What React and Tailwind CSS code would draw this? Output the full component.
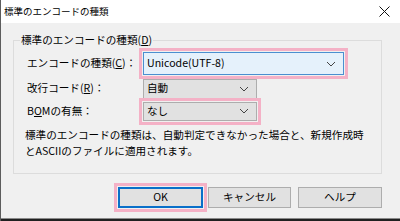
import React from 'react';

const Chevron = () => (
  <svg width="10" height="6" viewBox="0 0 10 6" className="shrink-0">
    <polyline points="1,1 5,5 9,1" fill="none" stroke="#444" strokeWidth="1" />
  </svg>
);

const Combo = ({ value, width, focused, ring, height }) => (
  <div
    className={`flex items-center justify-between pl-[3px] pr-[7px] border ${
      focused ? 'bg-[#e5f1fb] border-[#4a8fd0]' : 'bg-[#e1e1e1] border-[#adadad]'
    } ${ring ? 'outline-[3px] outline-solid outline-offset-[1px] outline-[#f4b1c6]' : ''}`}
    style={{ width, height }}
  >
    <span className="leading-none">{value}</span>
    <Chevron />
  </div>
);

const Row = ({ label, children, className }) => (
  <div className={`flex items-center ${className}`}>
    <div className="w-[116px] shrink-0 leading-none">{label}</div>
    {children}
  </div>
);

export default function App() {
  return (
    <div
      className="w-[400px] h-[221px] flex flex-col bg-[#f0f0f0] border-l border-[#5c5c5c] text-black overflow-hidden"
      style={{ fontFamily: '"Noto Sans CJK JP", "Noto Sans", sans-serif' }}
    >
      {/* title bar */}
      <div className="h-[23px] shrink-0 bg-white flex items-center justify-between pl-[3px] pr-[10px]">
        <span className="text-[9.5px] leading-none">標準のエンコードの種類</span>
        <svg width="11" height="11" viewBox="0 0 11 11">
          <path d="M0.5 0.5 L10.5 10.5 M10.5 0.5 L0.5 10.5" stroke="#111" strokeWidth="1" />
        </svg>
      </div>

      <div className="flex-1 flex flex-col pl-[12px] pr-[18px] pt-[11px] text-[10.6px]">
        <fieldset className="h-[140px] border border-[#dcdcdc] px-[13px] m-0">
          <legend className="ml-[-7px] px-[1px] leading-[12px]">
            標準のエンコードの種類(<u>D</u>)
          </legend>

          <Row className="mt-[6px] h-[23px]" label={<>エンコードの種類(<u>C</u>)：</>}>
            <Combo value="Unicode(UTF-8)" width={201} height={23} focused ring />
          </Row>
          <Row className="mt-[3px] h-[21px]" label={<>改行コード(<u>R</u>)：</>}>
            <Combo value="自動" width={114} height={20} />
          </Row>
          <Row className="mt-[2px] h-[20px]" label={<>B<u>O</u>Mの有無：</>}>
            <Combo value="なし" width={114} height={19} ring />
          </Row>

          <div className="mt-[6px] ml-[-2px] leading-[15.5px]">
            <p>標準のエンコードの種類は、自動判定できなかった場合と、新規作成時</p>
            <p>とASCIIのファイルに適用されます。</p>
          </div>
        </fieldset>

        <div className="mt-[13px] flex justify-end gap-[4px]">
          <button className="w-[85px] h-[21px] bg-[#e1e1e1] border-2 border-[#0a6fc9] outline-[3px] outline-solid outline-offset-[1px] outline-[#f4b1c6] leading-none">
            OK
          </button>
          <button className="w-[83px] h-[21px] bg-[#e1e1e1] border border-[#adadad] leading-none ml-[1px]">
            キャンセル
          </button>
          <button className="w-[84px] h-[21px] bg-[#e1e1e1] border border-[#adadad] leading-none ml-[3px]">
            ヘルプ
          </button>
        </div>
      </div>

      <div className="h-[3px] shrink-0 border-t border-[#8a8a8a] bg-[#202020]" />
    </div>
  );
}
